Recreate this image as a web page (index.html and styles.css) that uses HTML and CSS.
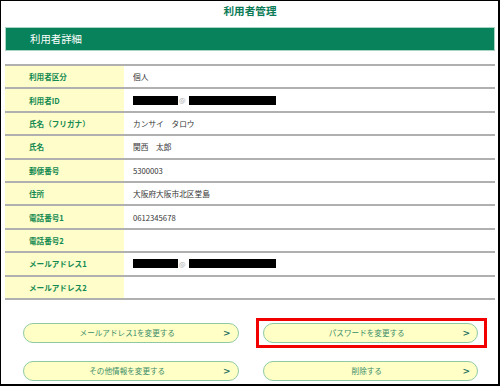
FILE: index.html
```html
<!DOCTYPE html>
<html lang="ja">
<head>
<meta charset="utf-8">
<link rel="stylesheet" href="styles.css">
</head>
<body>
<div class="page">
  <h1 class="title">利用者管理</h1>
  <div class="band">利用者詳細</div>
  <div class="table">
    <div class="row"><div class="label">利用者区分</div><div class="value">個人</div></div>
    <div class="row"><div class="label">利用者ID</div><div class="value"><span class="redact r1"></span><span class="at">@</span><span class="redact r2"></span></div></div>
    <div class="row"><div class="label">氏名（フリガナ）</div><div class="value">カンサイ　タロウ</div></div>
    <div class="row"><div class="label">氏名</div><div class="value">関西　太郎</div></div>
    <div class="row"><div class="label">郵便番号</div><div class="value">5300003</div></div>
    <div class="row"><div class="label">住所</div><div class="value">大阪府大阪市北区堂島</div></div>
    <div class="row"><div class="label">電話番号1</div><div class="value">0612345678</div></div>
    <div class="row"><div class="label">電話番号2</div><div class="value"></div></div>
    <div class="row"><div class="label">メールアドレス1</div><div class="value"><span class="redact r1"></span><span class="at">@</span><span class="redact r2"></span></div></div>
    <div class="row"><div class="label">メールアドレス2</div><div class="value"></div></div>
  </div>
  <div class="buttons">
    <a class="btn"><span></span><span class="btn-text">メールアドレス1を変更する</span><span class="chev">&gt;</span></a>
    <a class="btn highlighted"><span></span><span class="btn-text">パスワードを変更する</span><span class="chev">&gt;</span></a>
    <a class="btn"><span></span><span class="btn-text">その他情報を変更する</span><span class="chev">&gt;</span></a>
    <a class="btn"><span></span><span class="btn-text">削除する</span><span class="chev">&gt;</span></a>
  </div>
</div>
</body>
</html>
```
FILE: styles.css
```css
html, body {
  margin: 0;
  padding: 0;
  background: #fff;
}
body {
  font-family: "Noto Sans CJK JP", "Noto Sans", sans-serif;
}
.page {
  width: 500px;
  height: 386px;
  box-sizing: border-box;
  border-style: solid;
  border-color: #000;
  border-width: 1px 2px 2px 1px;
  padding: 0 3px 0 4px;
  overflow: hidden;
}
.title {
  margin: 0 0 6px;
  height: 20px;
  line-height: 20px;
  text-align: center;
  font-size: 10.6px;
  font-weight: bold;
  color: #0b7b57;
}
.band {
  height: 24px;
  box-sizing: border-box;
  background: #07825a;
  border: 1px solid #a9d6c3;
  color: #fff;
  font-size: 10.4px;
  line-height: 22px;
  padding-left: 24px;
}
.table {
  margin-top: 13px;
  border-top: 2px solid #b0b0b0;
}
.row {
  display: grid;
  grid-template-columns: 119px 1fr;
  height: 23.4px;
  box-sizing: border-box;
  border-bottom: 2px solid #b0b0b0;
}
.label {
  background: #fffdc9;
  color: #138a52;
  font-weight: bold;
  font-size: 7.6px;
  padding-left: 24px;
  display: flex;
  align-items: center;
}
.value {
  color: #333;
  font-size: 7.7px;
  padding-left: 9px;
  display: flex;
  align-items: center;
}
.redact {
  display: inline-block;
  height: 9px;
  background: #000;
}
.r1 { width: 45px; }
.r2 { width: 87px; }
.at {
  color: #aaa;
  font-size: 7px;
  width: 11px;
  padding-left: 1px;
  box-sizing: border-box;
}
.buttons {
  margin-top: 23px;
  padding: 0 17px 0 18px;
  display: grid;
  grid-template-columns: 1fr 1fr;
  column-gap: 24px;
  row-gap: 18px;
}
.btn {
  position: relative;
  height: 20px;
  box-sizing: border-box;
  border: 1.5px solid #8fc9a4;
  border-radius: 10px;
  background: #ffffc6;
  display: grid;
  grid-template-columns: 1fr auto 1fr;
  align-items: center;
  padding-right: 7px;
}
.btn-text {
  color: #3a8c68;
  font-size: 7.6px;
  white-space: nowrap;
}
.chev {
  justify-self: end;
  color: #1f6f5e;
  font-family: "DejaVu Sans", sans-serif;
  font-weight: bold;
  font-size: 9px;
}
.highlighted::after {
  content: "";
  position: absolute;
  left: -8px;
  right: -10px;
  top: -6px;
  bottom: -6px;
  border: 3px solid #f20000;
}
```
